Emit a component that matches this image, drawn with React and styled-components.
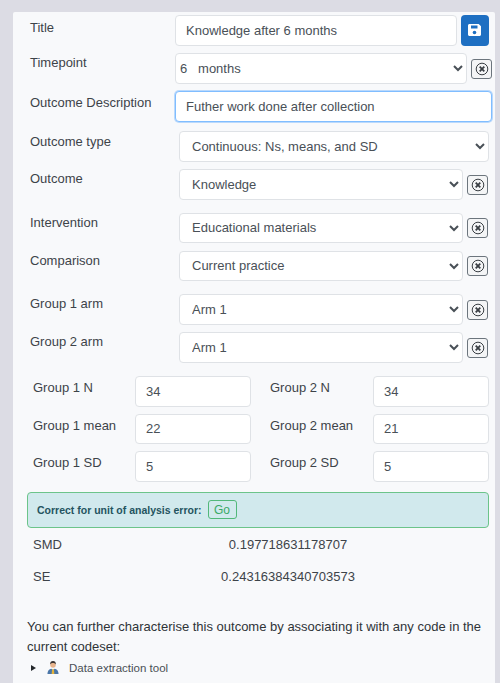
import React from 'react'
import styled, { createGlobalStyle } from 'styled-components'

const GlobalStyle = createGlobalStyle`
  html, body {
    margin: 0;
    height: 683px;
    overflow: hidden;
    background: #dcdce4;
    font-family: "Liberation Sans", Arial, sans-serif;
    font-size: 13px;
    color: #3d4349;
  }
`

const Panel = styled.div`
  margin: 12px 5px 0 13px;
  height: 671px;
  box-sizing: border-box;
  padding: 3px 3px 0 14px;
  background: #f8f9fb;
  border-radius: 2px 2px 0 0;
`

const Row = styled.div`
  display: flex;
  align-items: flex-start;
  margin-top: ${p => p.$gap || 0}px;
  margin-right: ${p => p.$right || 0}px;
`

const Label = styled.label`
  flex: none;
  box-sizing: border-box;
  width: ${p => p.$width || 152}px;
  padding-left: 3px;
  padding-top: ${p => p.$top || 0}px;
  line-height: 19px;
  font-size: 13px;
  color: #3d4349;
`

const Input = styled.input`
  box-sizing: border-box;
  flex: ${p => (p.$fixed ? 'none' : 1)};
  width: ${p => (p.$fixed ? '116px' : 'auto')};
  min-width: 0;
  height: 30.5px;
  padding: 0 10px;
  font-family: inherit;
  font-size: 13px;
  color: #495057;
  background: #fff;
  border: 1px solid ${p => (p.$focused ? '#80bdff' : '#dfe2e6')};
  border-radius: 4px;
  outline: none;
  box-shadow: ${p => (p.$focused ? '0 0 0 1px rgba(0, 123, 255, 0.25)' : 'none')};
`

const Select = styled.select`
  box-sizing: border-box;
  flex: 1;
  min-width: 0;
  height: 30.5px;
  padding: 0 ${p => (p.$tight ? 0 : 8)}px;
  font-family: inherit;
  font-size: 13px;
  color: #495057;
  background: #fff;
  border: 1px solid #dfe2e6;
  border-radius: 4px;
  outline: none;
`

const ClearButton = styled.button`
  flex: none;
  display: flex;
  align-items: center;
  justify-content: center;
  box-sizing: border-box;
  width: 21px;
  height: 20px;
  margin: 5.5px 0 0 4px;
  padding: 0;
  background: #f4f5f6;
  border: 1px solid #6c757d;
  border-radius: 3px;
`

const SaveButton = styled.button`
  flex: none;
  display: flex;
  align-items: center;
  justify-content: center;
  width: 28px;
  height: 30.5px;
  margin-left: 4px;
  padding: 0;
  background: #1e6fc2;
  border: none;
  border-radius: 4px;
`

const StatsGrid = styled.div`
  display: grid;
  grid-template-columns: 231px 1fr;
  row-gap: 7px;
  margin: 13.5px 3px 0 0;
`

const StatCell = styled.div`
  display: flex;
  align-items: flex-start;
  justify-content: space-between;
  padding-left: ${p => p.$inset}px;
  padding-right: ${p => p.$end || 0}px;
`

const StatLabel = styled.span`
  line-height: 19px;
  padding-top: 2px;
  color: #3d4349;
`

const Alert = styled.div`
  display: flex;
  align-items: center;
  box-sizing: border-box;
  height: 36.5px;
  margin: 10px 3px 0 0;
  padding: 0 9px;
  background: #d1e9ed;
  border: 1px solid #6cc48a;
  border-radius: 4px;
  font-size: 10.5px;
  font-weight: bold;
  color: #24545f;
`

const GoButton = styled.button`
  width: 29px;
  height: 19px;
  margin-left: 6px;
  padding: 0;
  font-family: inherit;
  font-size: 12px;
  color: #3aa866;
  background: transparent;
  border: 1px solid #52b87a;
  border-radius: 3px;
`

const Result = styled.div`
  display: grid;
  grid-template-columns: 60px 1fr;
  margin: ${p => p.$gap}px 3px 0 0;
  line-height: 20px;
  color: #3d4349;
`

const ResultName = styled.span`
  padding-left: 6px;
`

const ResultValue = styled.span`
  text-align: center;
`

const Note = styled.p`
  margin: 30px 0 0;
  line-height: 20px;
  font-size: 13px;
  color: #2f3438;
`

const TreeRow = styled.div`
  display: flex;
  align-items: center;
  margin-top: 3px;
  padding-left: 4px;
  font-size: 11.5px;
  color: #4a5056;
`

const Caret = styled.span`
  width: 0;
  height: 0;
  border-left: 5px solid #23272b;
  border-top: 3.5px solid transparent;
  border-bottom: 3.5px solid transparent;
  margin-right: 11px;
`

const TreeText = styled.span`
  margin-left: 10px;
`

const CircleX = () => (
  <svg width="14" height="14" viewBox="0 0 14 14" fill="none" stroke="#3a3f44">
    <circle cx="7" cy="7" r="5.8" strokeWidth="1" />
    <path d="M4.7 4.7l4.6 4.6M9.3 4.7l-4.6 4.6" strokeWidth="1.8" />
  </svg>
)

const SaveIcon = () => (
  <svg width="14" height="14" viewBox="0 0 14 14">
    <path d="M1.5 1h9.2L13 3.3v8.2c0 .8-.7 1.5-1.5 1.5h-10C.7 13 0 12.3 0 11.5v-9C0 1.7.7 1 1.500 1z" fill="#fff" />
    <path d="M3 2.5h6.500v3H3z" fill="#1e6fc2" />
    <circle cx="6.5" cy="9.5" r="1.8" fill="#1e6fc2" />
  </svg>
)

const PersonIcon = () => (
  <svg width="12" height="15" viewBox="0 0 14 16">
    <path d="M0.5 15.5c0-3.5 2-5.5 4.500-6l2 1.500 2-1.500c2.500.5 4.500 2.500 4.500 6z" fill="#4a76a8" />
    <path d="M6 10h2l.6 5.500H5.400z" fill="#e2b23c" />
    <circle cx="7" cy="5" r="3.2" fill="#e9b48c" />
    <path d="M3.6 4.500C3.400 1.800 5 .5 7 .5s3.600 1.300 3.400 4C9.500 3 8 2.700 7 2.700S4.500 3 3.600 4.500z" fill="#3a3230" />
  </svg>
)

const ClearableSelect = ({ value, tight }) => (
  <>
    <Select $tight={tight} defaultValue={value}>
      <option>{value}</option>
    </Select>
    <ClearButton type="button"><CircleX /></ClearButton>
  </>
)

const arms = [
  { label: 'Intervention', value: 'Educational materials', gap: 13 },
  { label: 'Comparison', value: 'Current practice', gap: 7.5 },
  { label: 'Group 1 arm', value: 'Arm 1', gap: 13 },
  { label: 'Group 2 arm', value: 'Arm 1', gap: 7.5 },
]

const stats = [
  ['Group 1 N', '34', 'Group 2 N', '34'],
  ['Group 1 mean', '22', 'Group 2 mean', '21'],
  ['Group 1 SD', '5', 'Group 2 SD', '5'],
]

export default function App() {
  return (
    <>
      <GlobalStyle />
      <Panel>
        <Row $right={3}>
          <Label $width={148} $top={3}>Title</Label>
          <Input defaultValue="Knowledge after 6 months" />
          <SaveButton type="button"><SaveIcon /></SaveButton>
        </Row>
        <Row $gap={7.5}>
          <Label $width={148}>Timepoint</Label>
          <ClearableSelect tight value={'6\u00a0\u00a0\u00a0months'} />
        </Row>
        <Row $gap={7.5}>
          <Label $width={148} $top={2}>Outcome Description</Label>
          <Input $focused defaultValue="Futher work done after collection" />
        </Row>
        <Row $gap={9.5} $right={3}>
          <Label $top={1}>Outcome type</Label>
          <Select defaultValue="Continuous: Ns, means, and SD">
            <option>Continuous: Ns, means, and SD</option>
          </Select>
        </Row>
        <Row $gap={7.5} $right={4}>
          <Label>Outcome</Label>
          <ClearableSelect value="Knowledge" />
        </Row>
        {arms.map(arm => (
          <Row key={arm.label} $gap={arm.gap} $right={4}>
            <Label>{arm.label}</Label>
            <ClearableSelect value={arm.value} />
          </Row>
        ))}
        <StatsGrid>
          {stats.map(([labelA, valueA, labelB, valueB]) => (
            <React.Fragment key={labelA}>
              <StatCell $inset={6} $end={7}>
                <StatLabel>{labelA}</StatLabel>
                <Input $fixed defaultValue={valueA} />
              </StatCell>
              <StatCell $inset={12}>
                <StatLabel>{labelB}</StatLabel>
                <Input $fixed defaultValue={valueB} />
              </StatCell>
            </React.Fragment>
          ))}
        </StatsGrid>
        <Alert>
          Correct for unit of analysis error:
          <GoButton type="button">Go</GoButton>
        </Alert>
        <Result $gap={7}>
          <ResultName>SMD</ResultName>
          <ResultValue>0.197718631178707</ResultValue>
        </Result>
        <Result $gap={12}>
          <ResultName>SE</ResultName>
          <ResultValue>0.24316384340703573</ResultValue>
        </Result>
        <Note>You can further characterise this outcome by associating it with any code in the current codeset:</Note>
        <TreeRow>
          <Caret />
          <PersonIcon />
          <TreeText>Data extraction tool</TreeText>
        </TreeRow>
      </Panel>
    </>
  )
}
